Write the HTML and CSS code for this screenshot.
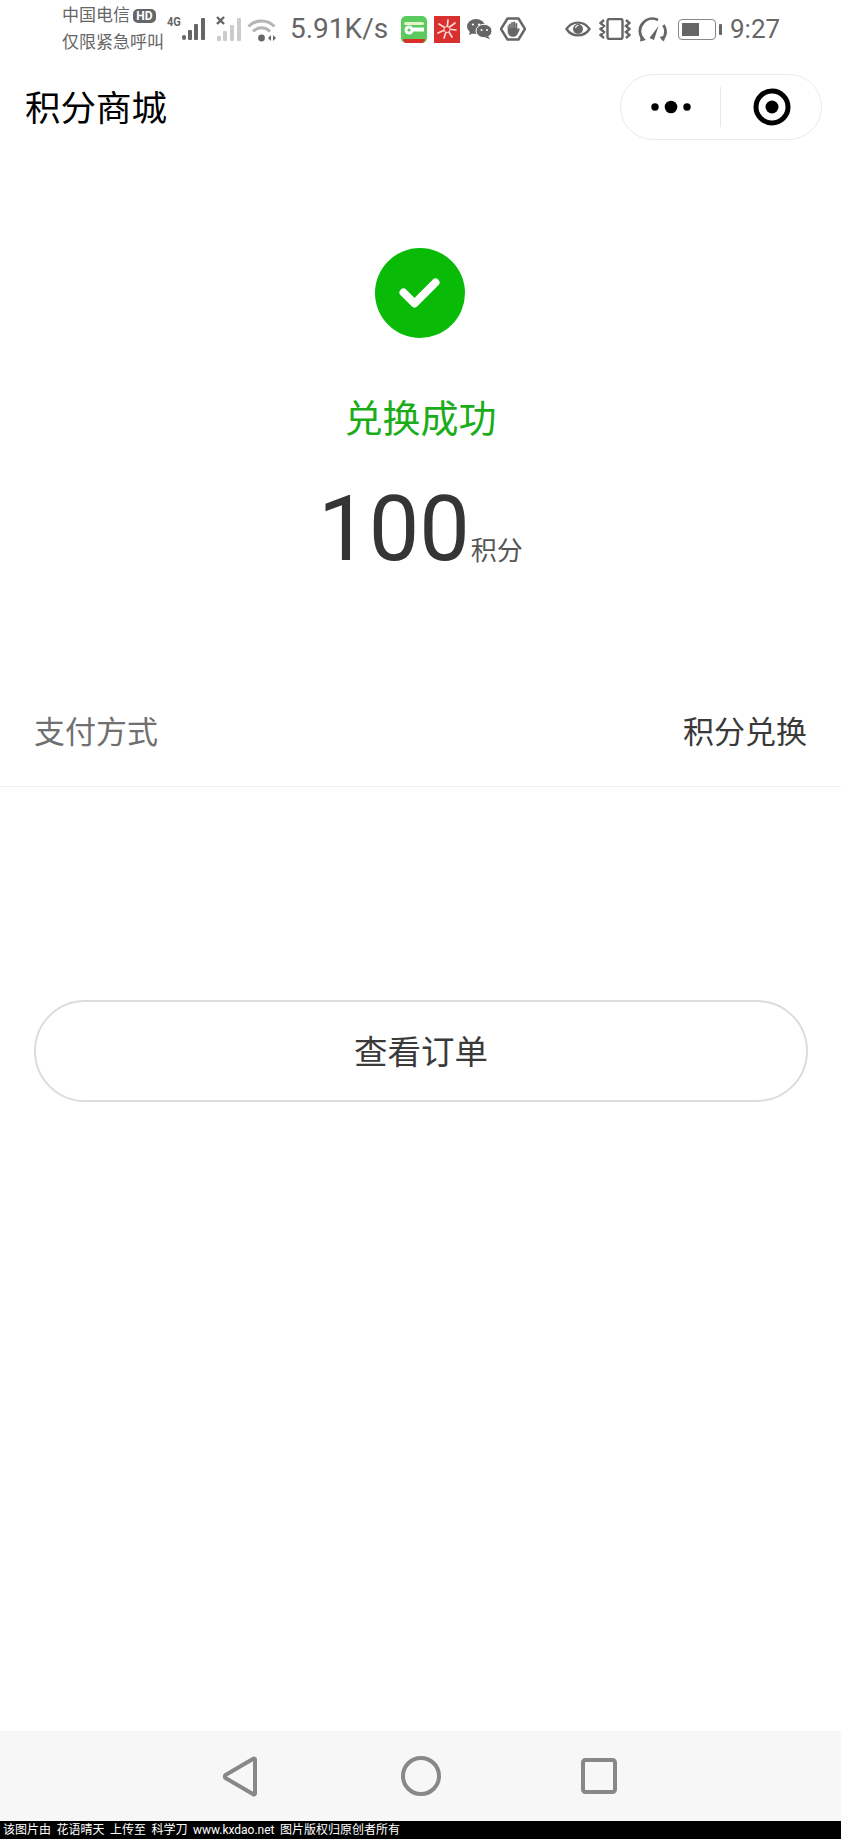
FILE: index.html
```html
<!DOCTYPE html>
<html lang="zh-CN">
<head>
<meta charset="utf-8">
<title>积分商城</title>
<link rel="stylesheet" href="styles.css">
</head>
<body>
<div class="app">
  <header class="status">
    <div class="carrier">
      <div class="carrier-line">中国电信<span class="hd">HD</span></div>
      <div class="carrier-line">仅限紧急呼叫</div>
    </div>
    <div class="net-tag">4G</div>
    <svg class="ic-signal" width="26" height="24" viewBox="0 0 26 24">
      <g fill="#666">
        <rect x="0" y="18" width="4" height="5" rx="2"/>
        <rect x="6" y="13" width="4" height="10" rx="1"/>
        <rect x="12" y="7" width="4" height="16" rx="1"/>
        <rect x="19" y="1" width="4" height="22" rx="1"/>
      </g>
    </svg>
    <svg class="ic-signal2" width="26" height="26" viewBox="0 0 26 26">
      <path d="M1 1l7 7M8 1l-7 7" stroke="#666" stroke-width="2.4" fill="none"/>
      <g fill="#ccc">
        <rect x="1" y="20" width="4" height="5" rx="1"/>
        <rect x="7" y="15" width="4" height="10" rx="1"/>
        <rect x="14" y="9" width="4" height="16" rx="1"/>
        <rect x="21" y="2" width="4" height="23" rx="1"/>
      </g>
    </svg>
    <svg class="ic-wifi" width="30" height="25" viewBox="0 0 30 25">
      <g fill="none" stroke="#b5b5b5" stroke-width="3">
        <path d="M1.5 8.5C8.5 1 20.500 1 27.500 8.500"/>
        <path d="M6 13.500c5-5 12-5 17 0"/>
      </g>
      <circle cx="14.500" cy="20" r="3.400" fill="#666"/>
      <path d="M21 20l3-3v6zM29 20l-3-3v6z" fill="#666"/>
    </svg>
    <div class="speed">5.91K/s</div>
    <svg class="app-icon" width="26" height="27" viewBox="0 0 26 27">
      <rect width="26" height="27" rx="5" fill="#5ccb5f"/>
      <path d="M2 23h22v0a4 4 0 0 1-3 4H5a4 4 0 0 1-3-4z" fill="#d9302c"/>
      <rect x="3" y="6" width="20" height="3" rx="1.500" fill="#e8f3c8"/>
      <circle cx="8" cy="14" r="4.500" fill="#fff"/>
      <rect x="11" y="11.500" width="12" height="4" fill="#fff"/>
      <circle cx="8" cy="14" r="1.600" fill="#5ccb5f"/>
    </svg>
    <svg class="app-icon-red" width="26" height="27" viewBox="0 0 26 27">
      <rect width="26" height="27" fill="#d8302e"/>
      <g stroke="#fbd9d6" stroke-width="1.700" stroke-linecap="round">
        <path d="M13 13l1-9M13 13l8-6M13 13l9 1M13 13l5 8M13 13l-3 9M13 13l-9 4M13 13l-8-5"/>
      </g>
      <circle cx="13" cy="13.500" r="3" fill="#d8302e" stroke="#fbd9d6"/>
    </svg>
    <svg class="ic-wechat" width="25" height="20" viewBox="0 0 25 20">
      <ellipse cx="9" cy="7.500" rx="9" ry="7.500" fill="#666"/>
      <path d="M3 12l-1 4 5-2z" fill="#666"/>
      <ellipse cx="17" cy="12" rx="8" ry="6.700" fill="#666" stroke="#fff"/>
      <path d="M21 17l2 3-5-1.500z" fill="#666"/>
      <circle cx="6" cy="5.500" r="1.100" fill="#fff"/>
      <circle cx="12" cy="5.500" r="1.100" fill="#fff"/>
      <circle cx="14.500" cy="11" r="1" fill="#fff"/>
      <circle cx="20" cy="11" r="1" fill="#fff"/>
    </svg>
    <svg class="ic-block" width="26" height="24" viewBox="0 0 26 24">
      <path d="M7.500 1.500h11L25 12l-6.500 10.500h-11L1 12z" fill="none" stroke="#666" stroke-width="2.400" stroke-linejoin="round"/>
      <path d="M8 8.500v6c0 3 2 5 5 5s4-1.500 5-4l1.500-3.500-1.500-.5-1 1.500V6.500h-1.200V11h-.8V5h-1.500v6h-.8V5.500h-1.400V11h-.8V7h-1.200v5z" fill="#666" stroke="#666" stroke-width=".6"/>
    </svg>
    <svg class="ic-eye" width="26" height="18" viewBox="0 0 26 18">
      <path d="M1.500 9C7 .500 19 .500 24.500 9 19 17.500 7 17.500 1.500 9z" fill="none" stroke="#666" stroke-width="2.400"/>
      <circle cx="13" cy="9" r="5" fill="#666"/>
      <path d="M10.500 8a3 3 0 0 1 3-2.500" stroke="#fff" stroke-width="1.200" fill="none"/>
    </svg>
    <svg class="ic-vibrate" width="32" height="22" viewBox="0 0 32 22">
      <rect x="8.500" y="1" width="15" height="20" rx="2" fill="none" stroke="#666" stroke-width="2.400"/>
      <path d="M5 2L1.500 5 5 8l-3.500 3L5 14l-3.500 3 3.500 3M27 2l3.500 3L27 8l3.500 3L27 14l3.500 3L27 20" fill="none" stroke="#666" stroke-width="2.400"/>
    </svg>
    <svg class="ic-gauge" width="29" height="25" viewBox="0 0 29 25">
      <path d="M5.500 23C1 18 .500 11 5 6c4-4.500 10-5.500 15-3M25.500 8c3 5 2.500 10.500-1.500 15" fill="none" stroke="#666" stroke-width="2.800"/>
      <path d="M11.500 21l9-12-4.500 14z" fill="#666"/>
      <path d="M3 18l5 5-6 1.500zM21.500 20l5.500-1.500-1 6z" fill="#666"/>
    </svg>
    <div class="battery">
      <div class="battery-body"><div class="battery-level" style="width:56%"></div></div>
      <div class="battery-tip"></div>
    </div>
    <div class="time">9:27</div>
  </header>

  <nav class="navbar">
    <div class="nav-title">积分商城</div>
    <div class="capsule">
      <div class="capsule-cell">
        <svg width="40" height="14" viewBox="0 0 40 14">
          <circle cx="4" cy="7" r="3.700" fill="#000"/>
          <circle cx="20" cy="7" r="6.300" fill="#000"/>
          <circle cx="36" cy="7" r="3.700" fill="#000"/>
        </svg>
      </div>
      <div class="capsule-cell capsule-cell-close">
        <svg width="38" height="38" viewBox="0 0 38 38">
          <circle cx="19" cy="19" r="16" fill="none" stroke="#000" stroke-width="5"/>
          <circle cx="19" cy="19" r="6.500" fill="#000"/>
        </svg>
      </div>
    </div>
  </nav>

  <main class="content">
    <section class="result">
      <svg class="result-icon" width="90" height="90" viewBox="0 0 90 90">
        <circle cx="45" cy="45" r="45" fill="#09bb07"/>
        <path d="M28.500 44.500l11 11 21-21" fill="none" stroke="#fff" stroke-width="8" stroke-linecap="round" stroke-linejoin="round"/>
      </svg>
      <h1 class="result-title">兑换成功</h1>
      <div class="amount"><span class="amount-value">100</span><span class="amount-unit">积分</span></div>
    </section>
    <div class="pay-row">
      <span class="pay-label">支付方式</span>
      <span class="pay-value">积分兑换</span>
    </div>
    <div class="actions">
      <button class="order-btn" type="button">查看订单</button>
    </div>
  </main>

  <footer class="sysnav">
    <svg width="36" height="41" viewBox="0 0 36 41">
      <path d="M33 3.500v34a1 1 0 0 1-1.700.7L3.500 22a2 2 0 0 1 0-3L31.300 2.800a1 1 0 0 1 1.700.7z" fill="none" stroke="#888" stroke-width="4" stroke-linejoin="round"/>
    </svg>
    <svg width="40" height="40" viewBox="0 0 40 40">
      <circle cx="20" cy="20" r="18" fill="none" stroke="#888" stroke-width="4"/>
    </svg>
    <svg class="sysnav-recent" width="36" height="36" viewBox="0 0 36 36">
      <rect x="2" y="2" width="32" height="32" rx="2.500" fill="none" stroke="#888" stroke-width="4"/>
    </svg>
  </footer>
  <div class="credit">该图片由 花语晴天 上传至 科学刀 www.kxdao.net 图片版权归原创者所有</div>
</div>
</body>
</html>
```

FILE: styles.css
```css
* {
  box-sizing: border-box;
}

html,
body {
  margin: 0;
  padding: 0;
  background: #fff;
}

body {
  font-family: Roboto, "Noto Sans CJK SC", sans-serif;
}

.app {
  width: 841px;
  height: 1839px;
  display: flex;
  flex-direction: column;
  overflow: hidden;
}

/* Phone status bar */
.status {
  height: 56px;
  padding: 2px 0 0 62px;
  display: flex;
  align-items: center;
  color: #666;
  flex: none;
}

.carrier {
  width: 105px;
  flex: none;
}

.carrier-line {
  height: 27px;
  font-size: 17px;
  line-height: 27px;
  white-space: nowrap;
  display: flex;
  align-items: center;
}

.hd {
  margin-left: 3px;
  width: 23px;
  height: 14px;
  border-radius: 5px;
  background: #666;
  color: #fff;
  font-size: 12px;
  font-weight: 700;
  line-height: 14px;
  text-align: center;
}

.net-tag {
  width: 15px;
  margin-top: -14px;
  font-size: 13px;
  font-weight: 700;
  line-height: 12px;
  flex: none;
  transform: scaleX(.85);
  transform-origin: left center;
}

.ic-signal {
  flex: none;
}

.ic-signal2 {
  margin-left: 8px;
  flex: none;
}

.ic-wifi {
  margin-left: 5px;
  margin-top: 2px;
  flex: none;
}

.speed {
  margin-left: 13px;
  width: 111px;
  font-size: 28px;
  line-height: 32px;
  flex: none;
}

.app-icon {
  flex: none;
}

.app-icon-red {
  margin-left: 7px;
  flex: none;
}

.ic-wechat {
  margin-left: 7px;
  flex: none;
}

.ic-block {
  margin-left: 8px;
  flex: none;
}

.ic-eye {
  margin-left: 39px;
  flex: none;
}

.ic-vibrate {
  margin-left: 8px;
  flex: none;
}

.ic-gauge {
  margin-left: 7px;
  flex: none;
}

.battery {
  margin-left: 11px;
  display: flex;
  align-items: center;
  gap: 3px;
  flex: none;
}

.battery-body {
  width: 38px;
  height: 21px;
  padding: 3px;
  border: 1.500px solid #888;
  border-radius: 4px;
}

.battery-level {
  height: 100%;
  background: #666;
}

.battery-tip {
  width: 3px;
  height: 11px;
  border-radius: 1px;
  background: #666;
}

.time {
  margin-left: 8px;
  font-size: 26px;
  line-height: 32px;
  flex: none;
}

/* Mini-program title bar */
.navbar {
  height: 100px;
  padding: 0 19px 0 25px;
  display: flex;
  align-items: center;
  justify-content: space-between;
  flex: none;
}

.nav-title {
  font-size: 35.500px;
  line-height: 44px;
  color: #000;
  margin-top: 5px;
}

.capsule {
  width: 202px;
  height: 66px;
  margin-top: 1px;
  display: flex;
  align-items: center;
  border: 1.500px solid #eaeaea;
  border-radius: 33px;
}

.capsule-cell {
  width: 99px;
  height: 40px;
  display: flex;
  align-items: center;
  justify-content: center;
}

.capsule-cell-close {
  width: 100px;
  padding-left: 3px;
  border-left: 1px solid #e6e6e6;
}

/* Exchange result */
.content {
  flex: 1;
  min-height: 0;
}

.result {
  padding-top: 92px;
  display: flex;
  flex-direction: column;
  align-items: center;
}

.result-icon {
  display: block;
  margin-right: 1px;
}

.result-title {
  margin: 59px 0 0;
  font-size: 38px;
  font-weight: 400;
  line-height: 44px;
  color: #1aad19;
}

.amount {
  margin-top: 34px;
  height: 110px;
  display: flex;
  align-items: baseline;
  color: #353535;
}

.amount-value {
  font-size: 90px;
  line-height: 110px;
}

.amount-unit {
  margin-left: 1px;
  font-size: 26px;
  color: #555;
}

.pay-row {
  height: 106px;
  margin-top: 96px;
  padding: 0 34px 9px;
  display: flex;
  align-items: center;
  justify-content: space-between;
  border-bottom: 1px solid #eee;
  font-size: 31px;
}

.pay-label {
  color: #707070;
}

.pay-value {
  color: #3a3a3a;
}

.actions {
  padding: 213px 33px 0 34px;
}

.order-btn {
  display: block;
  width: 100%;
  height: 102px;
  padding: 0 0 4px;
  border: 2.500px solid #dcdcdc;
  border-radius: 51px;
  background: #fff;
  color: #3a3a3a;
  font-family: inherit;
  font-size: 33.500px;
}

/* Android soft keys */
.sysnav {
  height: 90px;
  padding-left: 222px;
  display: flex;
  align-items: center;
  background: #f7f7f7;
  flex: none;
  gap: 143px;
}

.sysnav-recent {
  margin-left: -3px;
}

.credit {
  height: 18px;
  padding-left: 3px;
  background: #000;
  color: #fff;
  font-size: 12px;
  line-height: 18px;
  word-spacing: 2.500px;
  white-space: nowrap;
  flex: none;
}
```
